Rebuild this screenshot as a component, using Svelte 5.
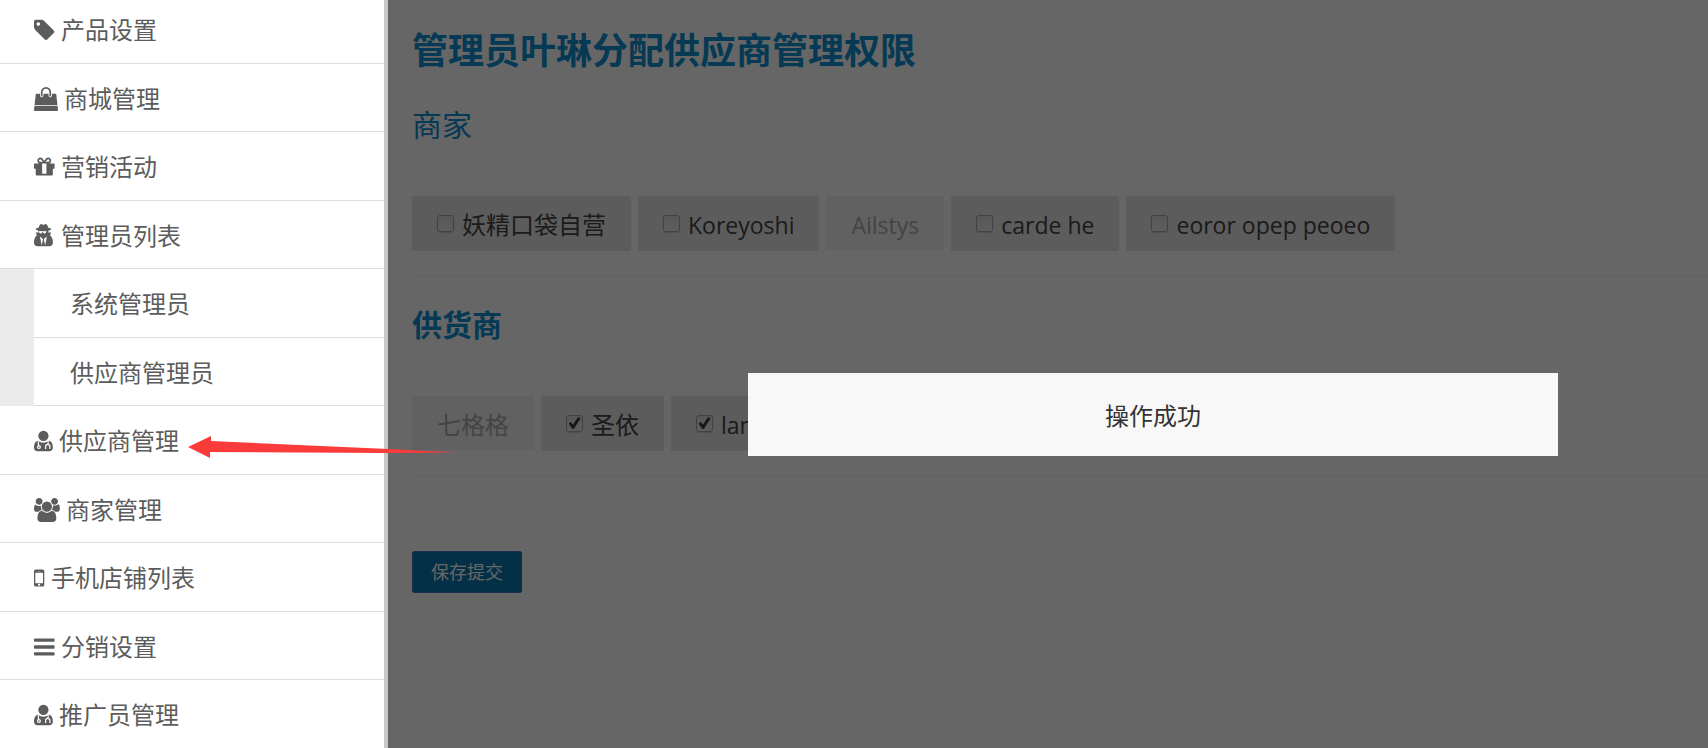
<script lang="ts">
type Icon = { box: string, width: number, path: string, lines?: string }

const icons: Record<string, Icon> = {
  tag: {
    box: '128 0 1536 1792',
    width: 21,
    path: 'M576 448q0-53-37.500-90.500t-90.500-37.500-90.500 37.500-37.500 90.500 37.500 90.500 90.500 37.500 90.500-37.500 37.500-90.500zm1067 576q0 53-37 90l-491 492q-39 37-91 37-53 0-90-37l-715-716q-38-37-64.500-101t-26.500-117v-416q0-52 38-90t90-38h416q53 0 117 26.500t102 64.500l715 714q37 39 37 91z'
  },
  bag: {
    box: '0 0 1792 1792',
    width: 24,
    path: 'M1757 1408l35 313q3 28-16 50-19 21-48 21h-1664q-29 0-48-21-19-22-16-50l35-313h1722zm-93-839l86 775h-1708l86-775q3-24 21-40.500t43-16.500h256v128q0 53 37.500 90.500t90.500 37.500 90.500-37.500 37.500-90.500v-128h384v128q0 53 37.500 90.500t90.500 37.500 90.500-37.500 37.500-90.500v-128h256q25 0 43 16.500t21 40.500zm-384-185v256q0 26-19 45t-45 19-45-19-19-45v-256q0-106-75-181t-181-75-181 75-75 181v256q0 26-19 45t-45 19-45-19-19-45v-256q0-159 112.500-271.500t271.500-112.500 271.500 112.500 112.500 271.500z'
  },
  gift: {
    box: '128 0 1536 1792',
    width: 21,
    path: 'M1056 1356v-716h-320v716q0 25 18 38.500t46 13.500h192q28 0 46-13.500t18-38.500zm-456-844h195l-126-161q-26-31-69-31-40 0-68 28t-28 68 28 68 68 28zm688-96q0-40-28-68t-68-28q-43 0-69 31l-125 161h194q40 0 68-28t28-68zm376 256v320q0 14-9 23t-23 9h-96v416q0 40-28 68t-68 28h-1088q-40 0-68-28t-28-68v-416h-96q-14 0-23-9t-9-23v-320q0-14 9-23t23-9h440q-93 0-158.500-65.500t-65.500-158.500 65.500-158.500 158.500-65.500q107 0 168 77l128 165 128-165q61-77 168-77 93 0 158.500 65.500t65.500 158.500-65.500 158.500-158.500 65.500h440q14 0 23 9t9 23z'
  },
  secret: {
    box: '192 0 1408 1792',
    width: 21,
    path: 'M768 1600l96-448-96-128-128-64zm256 0l128-640-128 64-96 128zM1122 539q-2-4-4-6-10-8-96-8-70 0-167 19-7 2-21 2t-21-2q-97-19-167-19-86 0-96 8-2 2-4 6 2 18 4 27 2 3 7.500 6.500t7.500 10.500q2 4 7.500 20.500t7 20.500 7.500 17 8.500 17 9 14 12 13.500 14 9.500 17.500 8 20.500 4 24.500 2q36 0 59-12.500t32.500-30 14.500-34.500 11.500-29.500 17.500-12.500h12q11 0 17.500 12.500t11.500 29.500 14.500 34.500 32.500 30 59 12.500q13 0 24.500-2t20.500-4 17.500-8 14-9.500 12-13.500 9-14 8.500-17 7.500-17 7-20.500 7.500-20.500q2-7 7.500-10.500t7.500-6.500q2-9 4-27zM1600 1405q0 121-73 190t-194 69h-874q-121 0-194-69t-73-190q0-61 4.500-118t19-125.500 37.500-123.500 63.500-103.500 93.500-74.500l-90-220h214q-22-64-22-128 0-12 2-32-194-40-194-96 0-57 210-99 17-62 51.500-134t70.500-114q32-37 76-37 30 0 84 31t84 31 84-31 84-31q44 0 76 37 36 42 70.500 114t51.500 134q210 42 210 99 0 56-194 96 7 81-20 160h214l-82 225q63 33 107.500 96.500t65.500 143.500 29 151.500 8 148.500z'
  },
  doctor: {
    box: '192 0 1408 1792',
    width: 19,
    path: 'M1280 512a384 384 0 1 1-768 0a384 384 0 1 1 768 0zM500 880c-230 30-308 250-308 525c0 160 107 259 267 259h874c160 0 267-99 267-259c0-275-78-495-308-525c-120 100-250 140-396 140s-276-40-396-140z',
    lines: 'M520 900q-20 120 20 340M665 1350a105 105 0 1 1-210 0a105 105 0 1 1 210 0zM1250 900q20 110-30 240M1060 1500v-190a156 156 0 0 1 320 0v190'
  },
  group: {
    box: '-64 0 1920 1792',
    width: 26,
    path: 'M529 896q-162 5-265 128h-134q-82 0-138-40.500t-56-118.500q0-353 124-353 6 0 43.500 21t97.500 42.500 119 21.500q67 0 133-23-5 37-5 66 0 159 93 293zm1071 637q0 120-73 189.500t-194 69.500h-874q-121 0-194-69.500t-73-189.500q0-53 3.500-103.500t14-109 26.500-108.500 43-97.500 62-81 85.500-53.500 111.500-20q10 0 43 21.500t73 48 107 48 135 21.500 135-21.500 107-48 73-48 43-21.500q61 0 111.500 20t85.500 53.500 62 81 43 97.500 26.500 108.500 14 109 3.500 103.500zm-1024-1277q0 106-75 181t-181 75-181-75-75-181 75-181 181-75 181 75 75 181zm704 384q0 159-112.500 271.500t-271.500 112.500-271.500-112.500-112.500-271.500 112.500-271.500 271.500-112.500 271.500 112.500 112.500 271.500zm576 225q0 78-56 118.500t-138 40.500h-134q-103-123-265-128 93-134 93-293 0-29-5-66 66 23 133 23 59 0 119-21.500t97.500-42.500 43.500-21q124 0 124 353zm-128-609q0 106-75 181t-181 75-181-75-75-181 75-181 181-75 181 75 75 181z'
  },
  mobile: {
    box: '512 0 768 1792',
    width: 11,
    path: 'M976 1408q0-33-23.500-56.500t-56.500-23.500-56.500 23.500-23.500 56.500 23.500 56.500 56.500 23.500 56.500-23.500 23.500-56.500zm208-160v-704q0-13-9.500-22.500t-22.500-9.500h-512q-13 0-22.500 9.500t-9.500 22.500v704q0 13 9.500 22.500t22.500 9.500h512q13 0 22.500-9.500t9.500-22.500zm-192-848q0-16-16-16h-160q-16 0-16 16t16 16h160q16 0 16-16zm288-16v1024q0 52-38 90t-90 38h-512q-52 0-90-38t-38-90v-1024q0-52 38-90t90-38h512q52 0 90 38t38 90z'
  },
  bars: {
    box: '128 0 1536 1792',
    width: 21,
    path: 'M1664 1344v128q0 26-19 45t-45 19h-1408q-26 0-45-19t-19-45v-128q0-26 19-45t45-19h1408q26 0 45 19t19 45zm0-512v128q0 26-19 45t-45 19h-1408q-26 0-45-19t-19-45v-128q0-26 19-45t45-19h1408q26 0 45 19t19 45zm0-512v128q0 26-19 45t-45 19h-1408q-26 0-45-19t-19-45v-128q0-26 19-45t45-19h1408q26 0 45 19t19 45z'
  }
}

type Item = { label: string, icon?: string }

const menu: Item[] = [
  { label: '产品设置', icon: 'tag' },
  { label: '商城管理', icon: 'bag' },
  { label: '营销活动', icon: 'gift' },
  { label: '管理员列表', icon: 'secret' },
  { label: '系统管理员' },
  { label: '供应商管理员' },
  { label: '供应商管理', icon: 'doctor' },
  { label: '商家管理', icon: 'group' },
  { label: '手机店铺列表', icon: 'mobile' },
  { label: '分销设置', icon: 'bars' },
  { label: '推广员管理', icon: 'doctor' }
]

let sections = $state([
  {
    title: '商家',
    bold: false,
    options: [
      { name: '妖精口袋自营', checked: false, disabled: false },
      { name: 'Koreyoshi', checked: false, disabled: false },
      { name: 'Ailstys', checked: false, disabled: true },
      { name: 'carde he', checked: false, disabled: false },
      { name: 'eoror opep peoeo', checked: false, disabled: false }
    ]
  },
  {
    title: '供货商',
    bold: true,
    options: [
      { name: '七格格', checked: false, disabled: true },
      { name: '圣依', checked: true, disabled: false },
      { name: 'lan', checked: true, disabled: false }
    ]
  }
])

// Latin names run a size smaller than the Chinese ones
const isLatin = (name: string) => /^[\w ]+$/.test(name)
</script>

<div class="page">
  <nav class="sidebar">
    <ul>
      {#each menu as item}
        {@const icon = item.icon ? icons[item.icon] : null}
        <li class:sub={!icon}>
          <a href="#top">
            {#if icon}
              <svg
                viewBox={icon.box}
                width={icon.width}
                height="24"
                preserveAspectRatio="xMinYMid meet"
                aria-hidden="true">
                <path d={icon.path} />
                {#if icon.lines}
                  <path class="lines" d={icon.lines} />
                {/if}
              </svg>
            {/if}
            <span>{item.label}</span>
          </a>
        </li>
      {/each}
    </ul>
  </nav>

  <main>
    <h1>管理员叶琳分配供应商管理权限</h1>
    <form>
      {#each sections as section}
        <section>
          <h2 class:bold={section.bold}>{section.title}</h2>
          <div class="options">
            {#each section.options as option}
              {#if option.disabled}
                <button type="button" class="option" class:latin={isLatin(option.name)} disabled>{option.name}</button>
              {:else}
                <label class="option" class:latin={isLatin(option.name)}>
                  <input type="checkbox" bind:checked={option.checked}>
                  <span>{option.name}</span>
                </label>
              {/if}
            {/each}
          </div>
        </section>
      {/each}
      <button type="button" class="submit">保存提交</button>
    </form>
    <div class="dimmer"></div>
    <div class="modal" role="alertdialog" aria-label="操作成功">操作成功</div>
  </main>

  <svg class="arrow" viewBox="0 0 270 24" width="270" height="24" aria-hidden="true">
    <path d="M0 12L23 1V6L200 14L269 17.500L200 18L22 17V23Z" />
  </svg>
</div>

<style>
  :global(body) {
    font-family: "Open Sans", "Noto Sans CJK SC", sans-serif;
    font-size: 24px;
    color: #444;
  }

  .page {
    position: relative;
    display: flex;
    height: 100vh;
    overflow: hidden;
  }

  .sidebar {
    flex: none;
    width: 384px;
    border-right: 4px solid #c8c8c8;
    background: #fff;
  }

  /* the menu is scrolled a little way under the top edge */
  ul {
    margin: -5px 0 0;
    padding: 0;
    list-style: none;
  }

  li {
    box-sizing: border-box;
    height: 69px;
    border-bottom: 1px solid #dedede;
  }

  li:nth-child(even) {
    height: 68px;
  }

  li.sub {
    border-left: 34px solid #ebebeb;
    border-bottom: 0;
  }

  li.sub a {
    padding-left: 36px;
    border-bottom: 1px solid #dedede;
  }

  a {
    box-sizing: border-box;
    display: flex;
    align-items: center;
    gap: 6px;
    height: 100%;
    padding: 2px 0 0 34px;
    color: #5c5c5c;
    line-height: 36px;
    text-decoration: none;
  }

  a svg {
    flex: none;
    fill: #5c5c5c;
  }

  .lines {
    fill: none;
    stroke: #fff;
    stroke-width: 90;
  }

  main {
    position: relative;
    flex: 1;
    min-width: 0;
    padding: 24px 0 0 24px;
    background: #fff;
  }

  h1, h2 {
    margin: 0;
    color: #0e90d2;
  }

  h1 {
    font-size: 36px;
    line-height: 54px;
  }

  h2 {
    padding: 26px 0 50px;
    font-size: 30px;
    font-weight: 400;
    line-height: 42px;
  }

  h2.bold {
    padding-top: 28px;
    font-weight: 700;
  }

  section {
    border-bottom: 1px solid #eee;
    padding-bottom: 24px;
  }

  .options {
    display: flex;
    align-items: flex-start;
    gap: 7px;
    white-space: nowrap;
  }

  .option {
    box-sizing: border-box;
    display: flex;
    align-items: center;
    gap: 8px;
    height: 55px;
    padding: 3px 25px 0;
    border: 0;
    background: #e6e6e6;
    color: #444;
    font: inherit;
    line-height: 36px;
  }

  .option.latin {
    font-size: 23px;
  }

  .option:disabled {
    height: 54px;
    opacity: 0.45;
  }

  input {
    box-sizing: border-box;
    display: flex;
    align-items: center;
    justify-content: center;
    appearance: none;
    width: 17px;
    height: 17px;
    margin: 0 0 4px;
    border: 1px solid #a4a4a4;
    border-radius: 3px;
    background: linear-gradient(#dcdcdc, #eaeaea);
    box-shadow: 0 1px 1px #c4c4c4;
  }

  input:checked::before {
    content: "";
    width: 12px;
    height: 12px;
    background: #3c3c3c;
    clip-path: polygon(0 55%, 18% 42%, 38% 62%, 80% 0, 100% 12%, 44% 100%, 32% 100%);
  }

  .submit {
    box-sizing: border-box;
    height: 42px;
    margin-top: 75px;
    padding: 0 18px;
    border: 1px solid #4878c0;
    border-radius: 2px;
    background: #0c79b1;
    color: #fff;
    font: inherit;
    font-size: 18px;
    line-height: 24px;
  }

  .dimmer {
    position: absolute;
    inset: 0;
    background: rgba(0, 0, 0, 0.6);
  }

  .modal {
    position: absolute;
    top: 373px;
    left: 360px;
    box-sizing: border-box;
    width: 810px;
    padding: 25px 0 22px;
    background: #f8f8f8;
    color: #333;
    line-height: 36px;
    text-align: center;
  }

  .arrow {
    position: absolute;
    top: 435px;
    left: 188px;
    fill: #fb3a3a;
  }
</style>
